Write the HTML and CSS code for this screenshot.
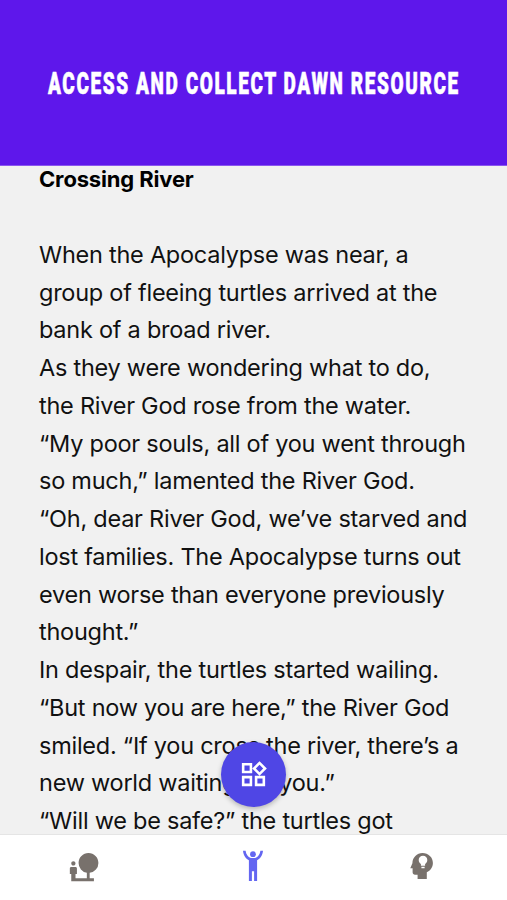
FILE: index.html
```html
<!DOCTYPE html>
<html lang="en">
<head>
    <meta charset="UTF-8">
    <meta name="viewport" content="width=device-width, initial-scale=1.0">
    <title>Crossing River</title>
    <link rel="stylesheet" href="styles.css">
</head>
<body>
    <header class="header">
        <h1 class="header-title">ACCESS AND COLLECT DAWN RESOURCE</h1>
    </header>
    <main class="story">
        <h2 class="story-title">Crossing River</h2>
        <div class="story-text">
            When the Apocalypse was near, a<br>
            group of fleeing turtles arrived at the<br>
            bank of a broad river.<br>
            As they were wondering what to do,<br>
            the River God rose from the water.<br>
            “My poor souls, all of you went through<br>
            so much,” lamented the River God.<br>
            “Oh, dear River God, we’ve starved and<br>
            lost families. The Apocalypse turns out<br>
            even worse than everyone previously<br>
            thought.”<br>
            In despair, the turtles started wailing.<br>
            “But now you are here,” the River God<br>
            smiled. “If you cross the river, there’s a<br>
            new world waiting for you.”<br>
            “Will we be safe?” the turtles got
        </div>
    </main>
    <button class="fab" aria-label="Menu">
        <svg width="31" height="31" viewBox="0 0 24 24" fill="currentColor">
            <path d="M16.66 4.52l2.83 2.83-2.83 2.83-2.83-2.83 2.83-2.83M9 5v4H5V5h4m10 10v4h-4v-4h4M9 15v4H5v-4h4m7.66-13.31L11 7.34 16.66 13l5.66-5.66-5.66-5.65zM11 3H3v8h8V3zm10 10h-8v8h8v-8zm-10 0H3v8h8v-8z"/>
        </svg>
    </button>
    <nav class="nav">
        <a class="nav-item">
            <svg width="34" height="34" viewBox="0 0 24 24" fill="currentColor">
                <path d="M22.17 9.17c0-3.87-3.13-7-7-7s-7 3.13-7 7A6.98 6.98 0 0 0 14 16.06V20H6v-3h1v-4c0-.55-.45-1-1-1H3c-.55 0-1 .45-1 1v4h1v5h16v-2h-3v-3.88a7 7 0 0 0 6.17-6.95zM4.5 11c.83 0 1.5-.67 1.5-1.5S5.33 8 4.5 8 3 8.67 3 9.5 3.67 11 4.5 11z"/>
            </svg>
        </a>
        <a class="nav-item active">
            <svg width="34" height="34" viewBox="0 0 34 34" fill="currentColor">
                <circle cx="17" cy="4.2" r="2.9"/>
                <path d="M7 .8h2.600c.4 3.400 2.300 6.300 5.200 7.200h4.400c2.900-.9 4.800-3.800 5.200-7.200H27c-.3 4.300-2.700 7.900-5.900 9.400v20.700h-3V21.200h-2.200v9.700h-3V10.200C9.700 8.700 7.300 5.100 7 .8z"/>
            </svg>
        </a>
        <a class="nav-item">
            <svg width="34" height="34" viewBox="0 0 34 34" fill="currentColor">
                <path fill-rule="evenodd" d="M17.500 3C23.300 3 27.900 7.400 27.900 13c0 4.200-2.400 7.600-6.100 9.300V29h-9.200v-4.300H10c-1.400 0-2.400-1-2.400-2.400v-4.100H5.300l2.100-5C7.600 7.300 11.900 3 17.500 3zm.5 2.700c-2.500 0-4.300 1.900-4.300 4.300 0 1.800.9 3 2.200 4.100v1.700h4.200v-1.700c1.300-1.100 2.200-2.300 2.200-4.100 0-2.400-1.800-4.300-4.300-4.300zM16.400 16.800v1.500h3.200v-1.500z"/>
            </svg>
        </a>
    </nav>
</body>
</html>
```
FILE: styles.css
```css
* {
    box-sizing: border-box;
}
body {
    margin: 0;
    height: 900px;
    display: flex;
    flex-direction: column;
    overflow: hidden;
    background-color: #f1f1f1;
    color: #111;
    font-family: Inter, "Liberation Sans", sans-serif;
}
.header {
    height: 166px;
    flex: none;
    display: flex;
    justify-content: center;
    align-items: center;
    padding-top: 2px;
    background-color: #5e17eb;
    border-bottom: 1px solid #8a56ee;
}
.header-title {
    margin: 0;
    flex: none;
    color: #fff;
    font-family: Roboto, "Liberation Sans", sans-serif;
    font-size: 31px;
    font-weight: 900;
    letter-spacing: 2.6px;
    white-space: nowrap;
    transform: scaleX(0.613);
    -webkit-text-stroke: 0.6px #fff;
}
.story {
    flex: 1;
    min-height: 0;
    padding: 0 0 0 39px;
    overflow: hidden;
}
.story-title {
    margin: 0 0 43px;
    color: #000;
    font-size: 22px;
    font-weight: 700;
    line-height: 27px;
    letter-spacing: -0.16px;
}
.story-text {
    font-size: 23.5px;
    line-height: 37.73px;
    letter-spacing: -0.25px;
    white-space: nowrap;
}
.fab {
    position: absolute;
    left: 221px;
    top: 742px;
    width: 65px;
    height: 65px;
    padding: 0;
    display: flex;
    justify-content: center;
    align-items: center;
    border: none;
    border-radius: 50%;
    background-color: #4f46e5;
    color: #fff;
    box-shadow: 0 2px 5px rgba(0, 0, 0, 0.25);
}
.nav {
    height: 66px;
    flex: none;
    display: flex;
    padding-right: 1px;
    padding-bottom: 1px;
    background-color: #fff;
    border-top: 1px solid #e5e5e5;
}
.nav-item {
    flex: 1;
    display: flex;
    justify-content: center;
    align-items: center;
    color: #78716c;
}
.nav-item.active {
    color: #6366f1;
}
```
